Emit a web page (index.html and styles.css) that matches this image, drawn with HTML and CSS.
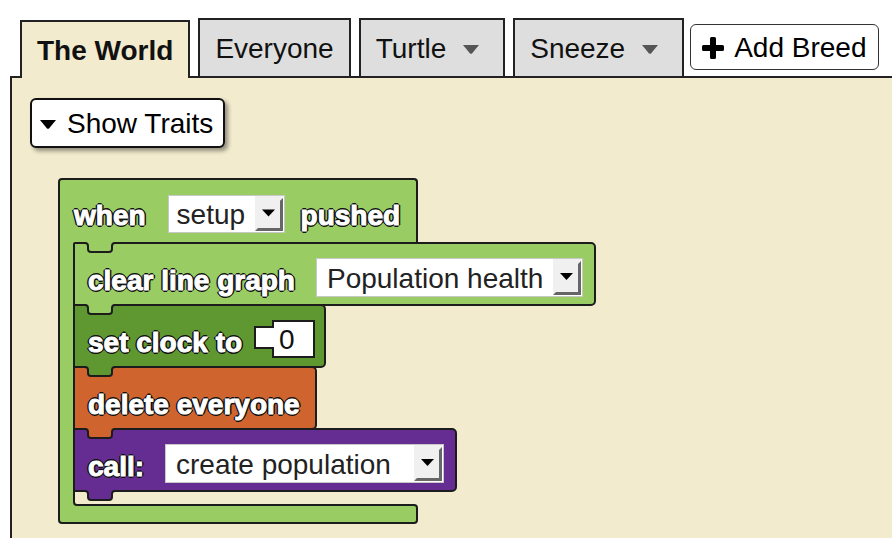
FILE: index.html
```html
<!DOCTYPE html>
<html lang="en">
<head>
<meta charset="utf-8">
<title>The World</title>
<link rel="stylesheet" href="styles.css">
</head>
<body>
<nav class="tabs">
  <button class="tab active" type="button">The World</button>
  <button class="tab" type="button">Everyone</button>
  <button class="tab menu" type="button">Turtle <svg class="caret" viewBox="0 0 16 9"><path d="M0 0H16L9 8.500Q8 9 7 8.500Z"/></svg></button>
  <button class="tab menu" type="button">Sneeze <svg class="caret" viewBox="0 0 16 9"><path d="M0 0H16L9 8.500Q8 9 7 8.500Z"/></svg></button>
  <button class="add" type="button"><svg class="plus" viewBox="0 0 22 22"><path d="M8 1.500Q8 0 9.500 0H12.500Q14 0 14 1.500V8H20.500Q22 8 22 9.500V12.500Q22 14 20.500 14H14V20.500Q14 22 12.500 22H9.500Q8 22 8 20.500V14H1.500Q0 14 0 12.500V9.500Q0 8 1.500 8H8Z"/></svg>Add Breed</button>
</nav>
<main class="workspace">
  <button class="traits" type="button"><svg class="caret" viewBox="0 0 16 9"><path d="M0 0H16L9 8.500Q8 9 7 8.500Z"/></svg>Show Traits</button>
  <section class="script">
    <div class="head green">
      <label class="word" for="event">when</label>
      <span class="pick short"><select id="event"><option>setup</option></select><svg class="drop" viewBox="0 0 29 37" preserveAspectRatio="none"><path class="face" d="M0 0H28V36H0Z"/><path class="shade" d="M28 2V36H0L3 33H25V5Z"/><path class="arrow" d="M7 14H20L13.500 21Z"/></svg></span>
      <span class="word">pushed</span>
      <svg class="knob" viewBox="0 0 32 12"><path class="mouth" d="M2 0H30L28 5H4Z"/><path d="M0 1H1Q4 1 4 4V7Q4 10 7 10H25Q28 10 28 7V4Q28 1 31 1H32"/></svg>
    </div>
    <div class="stack">
      <div class="block green">
        <label class="word" for="graph">clear line graph</label>
        <span class="pick"><select id="graph"><option>Population health</option></select><svg class="drop" viewBox="0 0 29 37" preserveAspectRatio="none"><path class="face" d="M0 0H28V36H0Z"/><path class="shade" d="M28 2V36H0L3 33H25V5Z"/><path class="arrow" d="M7 14H20L13.500 21Z"/></svg></span>
        <svg class="knob" viewBox="0 0 32 12"><path class="mouth" d="M2 0H30L28 5H4Z"/><path d="M0 1H1Q4 1 4 4V7Q4 10 7 10H25Q28 10 28 7V4Q28 1 31 1H32"/></svg>
      </div>
      <div class="block forest">
        <label class="word" for="clock">set clock to</label>
        <span class="plug"><svg class="socket" viewBox="0 0 61 38"><path d="M1 7H19V1H60V37H19V28H1Z"/></svg><input id="clock" type="text" value="0"></span>
        <svg class="knob" viewBox="0 0 32 12"><path class="mouth" d="M2 0H30L28 5H4Z"/><path d="M0 1H1Q4 1 4 4V7Q4 10 7 10H25Q28 10 28 7V4Q28 1 31 1H32"/></svg>
      </div>
      <div class="block orange">
        <span class="word">delete everyone</span>
        <svg class="knob" viewBox="0 0 32 12"><path class="mouth" d="M2 0H30L28 5H4Z"/><path d="M0 1H1Q4 1 4 4V7Q4 10 7 10H25Q28 10 28 7V4Q28 1 31 1H32"/></svg>
      </div>
      <div class="block purple">
        <label class="word" for="proc">call:</label>
        <span class="pick wide"><select id="proc"><option>create population</option></select><svg class="drop" viewBox="0 0 29 37" preserveAspectRatio="none"><path class="face" d="M0 0H28V36H0Z"/><path class="shade" d="M28 2V36H0L3 33H25V5Z"/><path class="arrow" d="M7 14H20L13.500 21Z"/></svg></span>
        <svg class="knob" viewBox="0 0 32 12"><path class="mouth" d="M2 0H30L28 5H4Z"/><path d="M0 1H1Q4 1 4 4V7Q4 10 7 10H25Q28 10 28 7V4Q28 1 31 1H32"/></svg>
      </div>
    </div>
    <svg class="foot" viewBox="0 0 360 32"><path class="fill" d="M1 0V28Q1 31 4 31H356Q359 31 359 28V16Q359 13 356 13H19Q16 13 16 10V0Z"/><path class="line" d="M1 0V28Q1 31 4 31H356Q359 31 359 28V16Q359 13 356 13H19Q16 13 16 10V0"/></svg>
  </section>
</main>
</body>
</html>
```

FILE: styles.css
```css
* { box-sizing: border-box; }

body {
  margin: 0;
  min-height: 100vh;
  display: flex;
  flex-direction: column;
  padding: 18px 0 0 10px;
  background: #fff;
  color: #111;
  font: 28px/32px "Liberation Sans", Arial, sans-serif;
}

button, input, select { font: inherit; color: inherit; margin: 0; }
svg { display: block; flex: none; }

.tabs {
  display: flex;
  align-items: flex-end;
  gap: 8px;
  padding-left: 10px;
}

.tab {
  height: 58px;
  padding: 2px 15px 0;
  border: 2px solid #222;
  border-bottom: 0;
  background: #dedede;
  white-space: nowrap;
}

.tab.active {
  position: relative;
  z-index: 1;
  margin-bottom: -2px;
  background: #f2ebce;
  font-weight: bold;
}

.menu {
  display: flex;
  align-items: center;
  gap: 17px;
  padding-right: 24px;
}

.caret { width: 16px; height: 9px; }
.menu .caret { fill: #555; }

.add {
  display: flex;
  align-items: center;
  align-self: center;
  gap: 10px;
  height: 46px;
  margin-left: -2px;
  padding: 2px 11px 0;
  border: 1px solid #333;
  border-radius: 6px;
  background: #fff;
  color: #000;
  white-space: nowrap;
}

.plus { width: 22px; height: 22px; }

.workspace {
  flex: 1;
  padding: 20px 18px 12px;
  border: 2px solid #222;
  border-width: 2px 0 0 2px;
  background: #f2ebce;
}

.traits {
  display: flex;
  align-items: center;
  gap: 11px;
  height: 50px;
  padding: 2px 10px 0 8px;
  border: 2px solid #111;
  border-radius: 6px;
  background: #fff;
  box-shadow: 3px 3px 4px rgba(0, 0, 0, .4);
  color: #000;
}

.script {
  display: flex;
  flex-direction: column;
  align-items: flex-start;
  margin: 30px 0 0 28px;
}

.green { --tone: #99cd63; }
.forest { --tone: #5f9730; }
.orange { --tone: #cf642e; }
.purple { --tone: #652d91; }

.head, .block {
  position: relative;
  display: flex;
  align-items: center;
  background: var(--tone);
  border: 2px solid #1c1c1c;
}

.head {
  width: 360px;
  height: 64px;
  gap: 16px;
  padding: 10px 0 0 14px;
  border-bottom: 0;
  border-radius: 4px 4px 0 0;
}

.stack {
  display: flex;
  flex-direction: column;
  align-items: flex-start;
  padding-left: 13px;
  border-left: 2px solid #1c1c1c;
  background: linear-gradient(#99cd63, #99cd63) 0 0 / 14px 100% no-repeat;
}

.block {
  height: 64px;
  margin-bottom: -2px;
  padding: 14px 11px 0 13px;
  gap: 21px;
  border-radius: 2px 5px 5px 0;
}

.block.forest { gap: 12px; padding-right: 9px; }
.block.orange { padding-right: 15px; }
.block:last-child { margin-bottom: 0; }

.word {
  color: #fff;
  font-weight: bold;
  white-space: nowrap;
  -webkit-text-stroke: 1px #fff;
  text-shadow:
    2px 0 #111, -2px 0 #111, 0 2px #111, 0 -2px #111,
    1px 1px #111, -1px 1px #111, 1px -1px #111, -1px -1px #111;
}

.knob {
  position: absolute;
  z-index: 2;
  left: 9px;
  bottom: -12px;
  width: 32px;
  height: 12px;
  fill: var(--tone);
  stroke: #1c1c1c;
  stroke-width: 2;
}

.knob .mouth { stroke: none; }
.head .knob { left: 24px; }

.pick, .plug {
  position: relative;
  display: flex;
  margin-bottom: 8px;
}

.pick select {
  height: 39px;
  padding: 4px 38px 0 10px;
  border: 1px solid #c8c8c8;
  border-radius: 0;
  background: #fff;
  color: #222;
  appearance: none;
}

.short { margin: 0 0 4px 6px; }
.short select { height: 38px; padding: 2px 38px 0 8px; }
.wide select { min-width: 279px; }

.drop {
  position: absolute;
  right: 1px;
  top: 1px;
  width: 29px;
  height: calc(100% - 2px);
  pointer-events: none;
}

.face { fill: #f0f0f0; }
.shade { fill: #666; }
.arrow { fill: #000; }

.plug { padding-left: 20px; }

.plug input {
  position: relative;
  width: 41px;
  height: 38px;
  padding: 2px 14px 0 5px;
  border: 0;
  background: none;
}

.socket {
  position: absolute;
  left: 0;
  top: 0;
  width: 61px;
  height: 38px;
  fill: #fff;
  stroke: #1c1c1c;
  stroke-width: 2;
}

.foot { width: 360px; height: 32px; }
.foot .fill { fill: #99cd63; }
.foot .line { fill: none; stroke: #1c1c1c; stroke-width: 2; }
```
